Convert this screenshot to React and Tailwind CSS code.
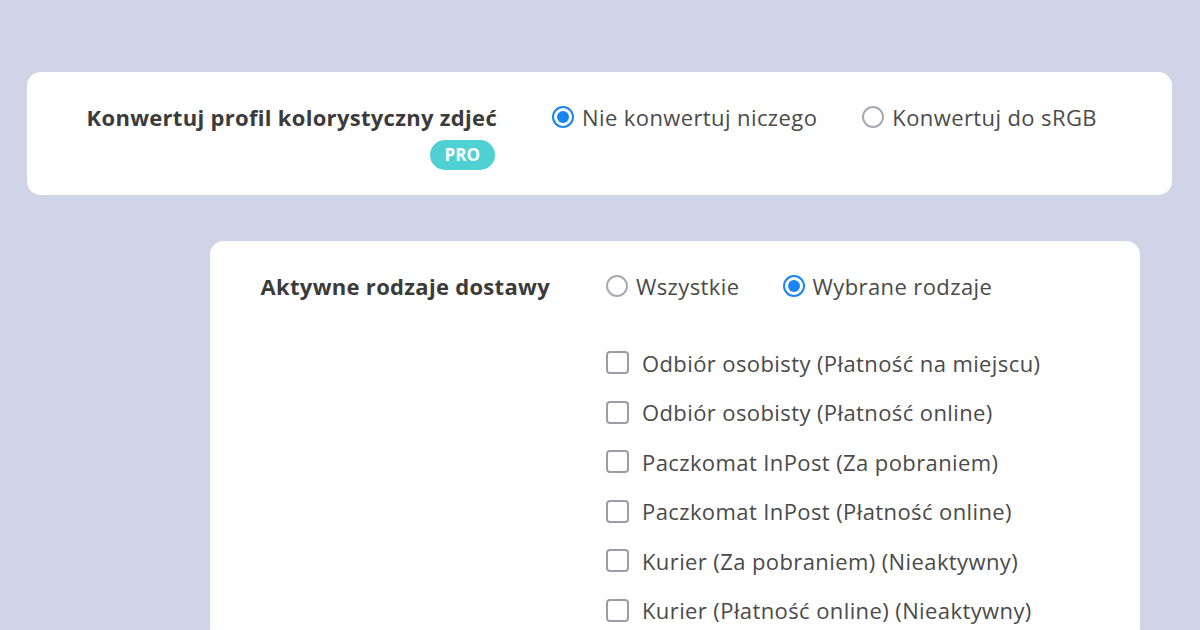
const font = { fontFamily: '"Open Sans", "Noto Sans", sans-serif' };

function Radio({ checked, label }) {
  return (
    <label className="flex items-center gap-[8px] text-[22px] text-[#4a4a4a] leading-none tracking-[0.4px]">
      <span
        className={
          checked
            ? 'w-[22px] h-[22px] rounded-full border-[2px] border-[#1a85f2] flex items-center justify-center bg-white'
            : 'w-[22px] h-[22px] rounded-full border-[2px] border-[#a9a9b3] bg-white'
        }
      >
        {checked && <span className="w-[12px] h-[12px] rounded-full bg-[#1a85f2]" />}
      </span>
      <span>{label}</span>
    </label>
  );
}

function Checkbox({ label }) {
  return (
    <label className="flex items-center gap-[13px] h-[49.5px] text-[22px] text-[#4a4a4a] leading-none tracking-[0.4px]">
      <span className="w-[23px] h-[23px] rounded-[4px] border-[2px] border-[#9d9ca8] bg-white" />
      <span>{label}</span>
    </label>
  );
}

const methods = [
  'Odbiór osobisty (Płatność na miejscu)',
  'Odbiór osobisty (Płatność online)',
  'Paczkomat InPost (Za pobraniem)',
  'Paczkomat InPost (Płatność online)',
  'Kurier (Za pobraniem) (Nieaktywny)',
  'Kurier (Płatność online) (Nieaktywny)',
];

export default function App() {
  return (
    <div className="w-[1200px] h-[630px] overflow-hidden bg-[#cfd5e6] pt-[72px]" style={font}>
      {/* colour profile */}
      <div className="ml-[27px] w-[1145px] h-[123px] bg-white rounded-[14px] flex pt-[31px]">
        <div className="w-[470px] flex flex-col items-end">
          <div className="text-[22px] font-bold text-[#3b3b3b] leading-[28px] tracking-[0.3px]">
            Konwertuj profil kolorystyczny zdjeć
          </div>
          <span className="mt-[9px] mr-[2px] h-[30px] px-[15px] rounded-full bg-[#4fd1d3] text-white text-[17px] font-bold flex items-center">
            PRO
          </span>
        </div>
        <div className="ml-[55px] flex gap-[45px] h-[28px] items-center">
          <Radio checked label="Nie konwertuj niczego" />
          <Radio label="Konwertuj do sRGB" />
        </div>
      </div>

      {/* delivery */}
      <div className="mt-[46px] ml-[210px] w-[930px] h-[400px] bg-white rounded-[14px] flex pt-[31px]">
        <div className="w-[340px] flex justify-end">
          <div className="text-[22px] font-bold text-[#3b3b3b] leading-[28px] h-[28px] tracking-[0.3px]">
            Aktywne rodzaje dostawy
          </div>
        </div>
        <div className="ml-[56px] flex flex-col">
          <div className="flex gap-[43px] h-[28px] items-center">
            <Radio label="Wszystkie" />
            <Radio checked label="Wybrane rodzaje" />
          </div>
          <div className="mt-[38px] flex flex-col">
            {methods.map((m) => (
              <Checkbox key={m} label={m} />
            ))}
          </div>
        </div>
      </div>
    </div>
  );
}
